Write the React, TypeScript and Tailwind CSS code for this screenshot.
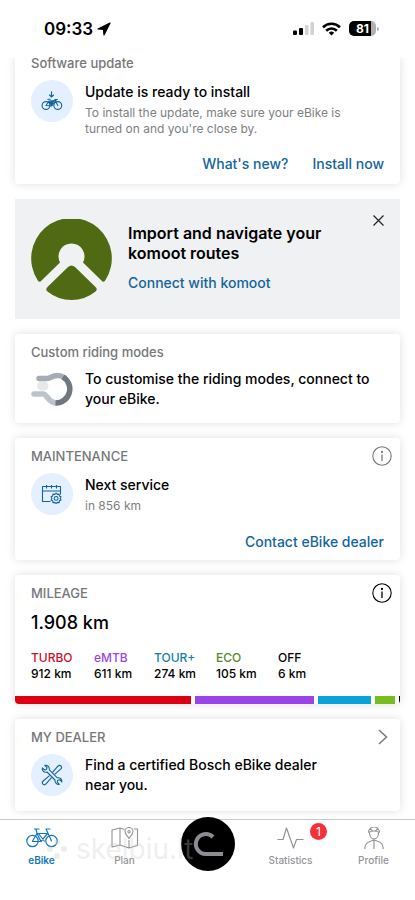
import type { ReactNode } from 'react';

const modes = [
  { name: 'TURBO', km: 912, text: 'text-[#c8102e]', bar: 'bg-[#dc0012]', width: 'w-[63px]' },
  { name: 'eMTB', km: 611, text: 'text-[#9747e8]', bar: 'bg-[#9a43e8]', width: 'w-[60px]' },
  { name: 'TOUR+', km: 274, text: 'text-[#1580a8]', bar: 'bg-[#0aa3d8]', width: 'w-[62px]' },
  { name: 'ECO', km: 105, text: 'text-[#56882a]', bar: 'bg-[#78bd20]', width: 'w-[62px]' },
  { name: 'OFF', km: 6, text: 'text-black', bar: 'bg-black', width: 'w-[60px]' },
];

function Card({ children, className = '' }: { children: ReactNode; className?: string }) {
  return (
    <section className={`bg-white shadow-[0_0_10px_rgba(0,0,0,0.13)] ${className}`}>{children}</section>
  );
}

function IconDisc({ children }: { children: ReactNode }) {
  return (
    <div className="flex size-[42px] shrink-0 items-center justify-center rounded-full bg-[#e4efff] text-[#12659c]">
      {children}
    </div>
  );
}

function Heading({ children, leading = 'leading-5' }: { children: ReactNode; leading?: string }) {
  return <h2 className={`text-[13px] font-medium text-[#757779] ${leading}`}>{children}</h2>;
}

function Bike({ className }: { className: string }) {
  return (
    <svg className={className} viewBox="0 0 32 20" fill="none" stroke="currentColor" strokeWidth="1.200" strokeLinecap="round" strokeLinejoin="round">
      <circle cx="6.5" cy="13" r="5.7" />
      <circle cx="25.5" cy="13" r="5.7" />
      <path d="M6.500 13 11 5.500H21.500L15 13.500H6.500M11 5.500 15 13.500M8.500 1h4.500M10 1l1 4.500M25.500 13 20 1h4M12.800 6l5.500 7" />
    </svg>
  );
}

function DownloadBike() {
  return (
    <svg className="h-[20px] w-[22px]" viewBox="0 0 22 20" fill="none" stroke="currentColor" strokeWidth="1.1" strokeLinecap="round" strokeLinejoin="round">
      <path d="M10.5.8v5M8.5 4l2 2 2-2" />
      <circle cx="5" cy="14.5" r="3.9" />
      <circle cx="16.8" cy="14.5" r="3.9" />
      <path d="M5 14.5 8 10l7-.5-4.3 5.5L5 14.5M8 10l2.7 5M6.8 8.3h2.5M16.8 14.5l-3-6h2.6" />
      <path d="m8.8 11 3.8-.7-1.8 4z" fill="currentColor" />
    </svg>
  );
}

function CalendarGear() {
  return (
    <svg className="h-[20px] w-[22px]" viewBox="0 0 22 20" fill="none" stroke="currentColor" strokeWidth="1.1" strokeLinejoin="round">
      <path d="M9.5 17.5H1.5V2.5h18v8M1.5 7h18M5.5 1v3.5M10.5 1v3.5M15.5 1v3.5" />
      <path d="m15.5 10 1.2 1.3 1.8-.3.3 1.8 1.6.8-.8 1.7.8 1.6-1.6.8-.3 1.8-1.8-.2-1.2 1.2-1.3-1.2-1.8.2-.3-1.8-1.6-.8.8-1.6-.8-1.7 1.6-.8.3-1.8 1.8.3z" transform="translate(-.4 -.9)" />
      <circle cx="15.1" cy="14.4" r="1.9" />
    </svg>
  );
}

function Wrenches() {
  return (
    <svg className="size-[22px]" viewBox="0 0 22 22" fill="none" stroke="currentColor" strokeWidth="1.1" strokeLinejoin="round" strokeLinecap="round">
      <path d="M3.8 1.3 6 3.5 5.5 5.4 3.6 6 1.4 3.8C.8 6 2.2 8 4.2 8.2c.8.1 1.3 0 1.8-.2l8 8c-.3 2.900 2 4.900 4.300 4.400l-2-2.200.4-2 2-.5 2.100 2.200c.5-2.600-1.500-4.500-4.500-4.100l-8-8c.6-2.800-1.700-5-4.500-4.500z" />
      <path d="m11.7 8.2 5-5.8c1-1.1 2.4-1.2 3.3-.4.8.9.7 2.2-.4 3.2l-5.7 5M8.2 11.8l-6 5.2c-1 1-1.1 2.3-.3 3.2.9.8 2.2.7 3.1-.3l5.3-6" />
    </svg>
  );
}

function RidingMode() {
  return (
    <svg className="h-[34px] w-[42px] shrink-0" viewBox="0 0 42 34" fill="none" strokeWidth="5.500">
      <path d="M10.500 14H13" stroke="#e6e8ea" strokeWidth="9" strokeLinecap="round" />
      <path d="M3 22H12c4 0 5 8.500 13 9" stroke="#bdc3ca" strokeLinecap="round" />
      <path d="M8 6.500H16c4 0 5-3 10.500-3 3 0 4.500.5 6.500 2" stroke="#a5acb5" strokeLinecap="round" />
      <path d="M32 5A14 14 0 0 1 24.500 31" stroke="#70777f" />
    </svg>
  );
}

function Komoot() {
  return (
    <svg className="size-[81px] shrink-0" viewBox="0 0 81 81" aria-label="komoot">
      <path d="M9.500 62.500 29 43.500A13 13 0 1 1 52 43.500L71.500 62.500q2 .8 3-1.500A40.300 40.300 0 1 0 6.500 61q1 2.300 3 1.500z" fill="#4f6a12" />
      <path d="M16.500 68 37 48q3.500-3 7 0L64.500 68q2.500 2.500 0 4.500Q54 81 40.500 81T16.500 72.500q-2.500-2 0-4.500z" fill="#4f6a12" />
    </svg>
  );
}

function InfoButton({ label, className }: { label: string; className: string }) {
  return (
    <button aria-label={label} className={className}>
      <svg className="size-5" viewBox="0 0 20 20" fill="none" stroke="currentColor" strokeWidth="1.100">
        <circle cx="10" cy="10" r="9.200" />
        <path d="M10 8.500V15" strokeWidth="1.300" />
        <circle cx="10" cy="6" r=".6" fill="currentColor" />
      </svg>
    </button>
  );
}

function StatusBar() {
  return (
    <header className="flex h-[57px] shrink-0 items-center justify-between pr-[36px] pl-[44px]">
      <div className="flex items-center gap-1">
        <time className="text-[17px] leading-6 font-semibold">09:33</time>
        <svg className="size-[14px]" viewBox="0 0 14 14">
          <path d="M13 1 1 7l5.500.500L7 13z" fill="#000" stroke="#000" strokeWidth="1.200" strokeLinejoin="round" />
        </svg>
      </div>
      <div className="flex items-center gap-2">
        <svg className="h-[13px] w-[21px]" viewBox="0 0 21 13">
          <rect y="8.500" width="4" height="4.500" rx="1" />
          <rect x="6" y="6" width="4" height="7" rx="1" />
          <rect x="12" y="3" width="3.500" height="10" rx="1" fill="#d2d2d2" />
          <rect x="17.500" y="0" width="3.500" height="13" rx="1" fill="#d2d2d2" />
        </svg>
        <svg className="h-[14px] w-[19px]" viewBox="0 0 19 14" fill="none" stroke="#000" strokeWidth="2.600">
          <path d="M1 5.200a12.200 12.200 0 0 1 17 0M4.200 8.700a7.600 7.600 0 0 1 10.600 0" />
          <path d="M9.500 13.500 6.800 10.800a4 4 0 0 1 5.400 0z" fill="#000" stroke="none" />
        </svg>
        <div className="flex items-center gap-px">
          <div className="flex h-[15px] w-[27px] items-center justify-center rounded-[5px] bg-linear-to-r from-black from-80% to-[#b0b0b0] to-80% text-[12px] font-bold text-white">
            81
          </div>
          <div className="h-1 w-[2px] rounded-r-full bg-[#b0b0b0]" />
        </div>
      </div>
    </header>
  );
}

function NavItem({ label, children, active = false }: { label: string; children: ReactNode; active?: boolean }) {
  return (
    <button className={`flex flex-1 flex-col items-center pt-[7px] ${active ? 'text-[#1478b8]' : 'text-[#929497]'}`}>
      <span className="relative flex h-[22px] items-center">{children}</span>
      <span className={`mt-1 text-[10px] leading-[14px] ${active ? 'font-semibold' : 'font-medium'}`}>{label}</span>
    </button>
  );
}

export default function App() {
  return (
    <div className="flex min-h-screen flex-col overflow-hidden bg-white font-['Inter','Liberation_Sans',sans-serif] text-black">
      <StatusBar />
      <main className="flex flex-1 flex-col gap-[15px] overflow-hidden px-[15px] pb-2">
        <Card className="rounded-b-sm px-4 pb-2">
          <Heading leading="leading-3">Software update</Heading>
          <div className="mt-[11px] flex gap-3">
            <IconDisc><DownloadBike /></IconDisc>
            <div>
              <h3 className="text-[14px] leading-6 font-medium">Update is ready to install</h3>
              <p className="mt-px text-[12px] leading-4 text-[#7d7f82]">
                To install the update, make sure your eBike is<br />turned on and you're close by.
              </p>
            </div>
          </div>
          <div className="mt-[15px] flex justify-end gap-6 text-[14px] leading-6 font-medium text-[#12659c]">
            <button>What's new?</button>
            <button>Install now</button>
          </div>
        </Card>

        <section className="flex h-[120px] shrink-0 items-center gap-4 bg-[#eff1f2] px-4">
          <Komoot />
          <div className="flex-1">
            <h3 className="text-[16px] leading-5 font-semibold">Import and navigate your<br />komoot routes</h3>
            <a href="#komoot" className="mt-2 block text-[14px] leading-6 font-medium text-[#12659c]">Connect with komoot</a>
          </div>
          <button aria-label="Close" className="mt-4 self-start">
            <svg className="size-[11px]" viewBox="0 0 11 11" stroke="#222" strokeWidth="1.200">
              <path d="m.5.5 10 10M10.500.5l-10 10" />
            </svg>
          </button>
        </section>

        <Card className="rounded-sm px-4 pt-2 pb-[14px]">
          <Heading>Custom riding modes</Heading>
          <div className="mt-[7px] flex items-center gap-3">
            <RidingMode />
            <p className="text-[14px] leading-5 font-medium">To customise the riding modes, connect to<br />your eBike.</p>
          </div>
        </Card>

        <Card className="rounded-sm px-4 pt-2 pb-[6px]">
          <div className="flex justify-between">
            <Heading>MAINTENANCE</Heading>
            <InfoButton label="Maintenance info" className="-mr-2 text-[#77797c]" />
          </div>
          <div className="mt-[7px] flex gap-3">
            <IconDisc><CalendarGear /></IconDisc>
            <div>
              <h3 className="text-[14px] leading-6 font-medium">Next service</h3>
              <p className="text-[12px] leading-[18px] text-[#7d7f82]">in 856 km</p>
            </div>
          </div>
          <div className="mt-[15px] flex justify-end text-[14px] leading-6 font-medium text-[#12659c]">
            <button>Contact eBike dealer</button>
          </div>
        </Card>

        <Card className="overflow-hidden rounded-sm">
          <div className="px-4 pt-2">
            <div className="flex justify-between">
              <Heading>MILEAGE</Heading>
              <InfoButton label="Mileage info" className="-mr-2 text-black" />
            </div>
            <p className="mt-2 text-[18px] leading-6 font-medium">1.908 km</p>
            <dl className="mt-[15px] flex text-[12px] leading-4 font-medium">
              {modes.map((mode) => (
                <div key={mode.name} className={mode.width}>
                  <dt className={mode.text}>{mode.name}</dt>
                  <dd>{mode.km} km</dd>
                </div>
              ))}
            </dl>
          </div>
          <div className="mt-[14px] flex h-2 gap-1">
            {modes.map((mode) => (
              <div key={mode.name} className={mode.bar} style={{ flexGrow: mode.km, flexBasis: 0 }} />
            ))}
          </div>
        </Card>

        <Card className="rounded-sm px-4 pt-2 pb-[15px]">
          <div className="flex items-center justify-between">
            <Heading>MY DEALER</Heading>
            <button aria-label="Open my dealer" className="-mr-1">
              <svg className="h-4 w-[10px]" viewBox="0 0 10 16" fill="none" stroke="#77797c" strokeWidth="1.500">
                <path d="m1 1 7.500 7L1 15" />
              </svg>
            </button>
          </div>
          <div className="mt-[7px] flex items-center gap-3">
            <IconDisc><Wrenches /></IconDisc>
            <p className="text-[14px] leading-5 font-medium">Find a certified Bosch eBike dealer<br />near you.</p>
          </div>
        </Card>
      </main>

      <nav className="relative flex h-[81px] shrink-0 border-t border-[#c9c9c9] bg-white">
        <NavItem label="eBike" active><Bike className="h-5 w-8" /></NavItem>
        <NavItem label="Plan">
          <svg className="h-[22px] w-[28px]" viewBox="0 0 28 22" fill="none" stroke="currentColor" strokeWidth="1.100" strokeLinejoin="round">
            <path d="M13.500 2.500 9 1 1 3v17l8-2 9 3 8.500-2.500V2H23M9 1v17M18 13v8" />
            <path d="M18 11.500c-2-3-4-4.500-4-7a4 4 0 0 1 8 0c0 2.500-2 4-4 7z" />
            <circle cx="18" cy="4.700" r="1.200" />
          </svg>
        </NavItem>
        <div className="flex flex-1 justify-center">
          <button aria-label="Ride" className="-mt-[3px] flex size-[54px] shrink-0 items-center justify-center rounded-full bg-black">
            <svg className="h-[28px] w-[32px]" viewBox="0 0 32 28" fill="none" stroke="#8b8d93" strokeWidth="4">
              <path d="M21 7A10 10 0 1 0 14 24H31" />
            </svg>
          </button>
        </div>
        <NavItem label="Statistics">
          <svg className="h-[22px] w-[27px]" viewBox="0 0 27 22" fill="none" stroke="currentColor" strokeWidth="1.200" strokeLinejoin="round">
            <path d="M.5 12.500H6L9.500 1 16.500 21l3-8.500h7" />
          </svg>
          <span className="absolute -top-[4px] left-[33px] flex size-[17px] items-center justify-center rounded-full bg-[#f5303d] text-[12px] text-white">1</span>
        </NavItem>
        <NavItem label="Profile">
          <svg className="h-[22px] w-[20px]" viewBox="0 0 20 22" fill="none" stroke="currentColor" strokeWidth="1.200" strokeLinejoin="round">
            <path d="M4.500 5.500a5.500 5.500 0 0 1 11 0M4.500 5.500q5.500-3 11 0M5.500 5.500c0 4 2 6.500 4.500 6.500s4.500-2.500 4.500-6.500M6.500 2 9 4.500M13.500 2 11 4.500M10 13v9M.8 22c0-4 1-6.500 6.200-8l3-1 3 1c5.200 1.500 6.200 4 6.200 8" />
          </svg>
        </NavItem>
        <div className="pointer-events-none absolute top-[11px] left-[46px] flex items-center gap-2 text-[28px] leading-9 text-[#c8c8c8]/30">
          <svg className="size-[22px]" viewBox="0 0 22 22" fill="currentColor">
            <circle cx="4" cy="11" r="3" /><circle cx="11" cy="4" r="3" /><circle cx="11" cy="18" r="3" /><circle cx="18" cy="11" r="3" />
          </svg>
          <span>skelbiu.lt</span>
        </div>
      </nav>
    </div>
  );
}
